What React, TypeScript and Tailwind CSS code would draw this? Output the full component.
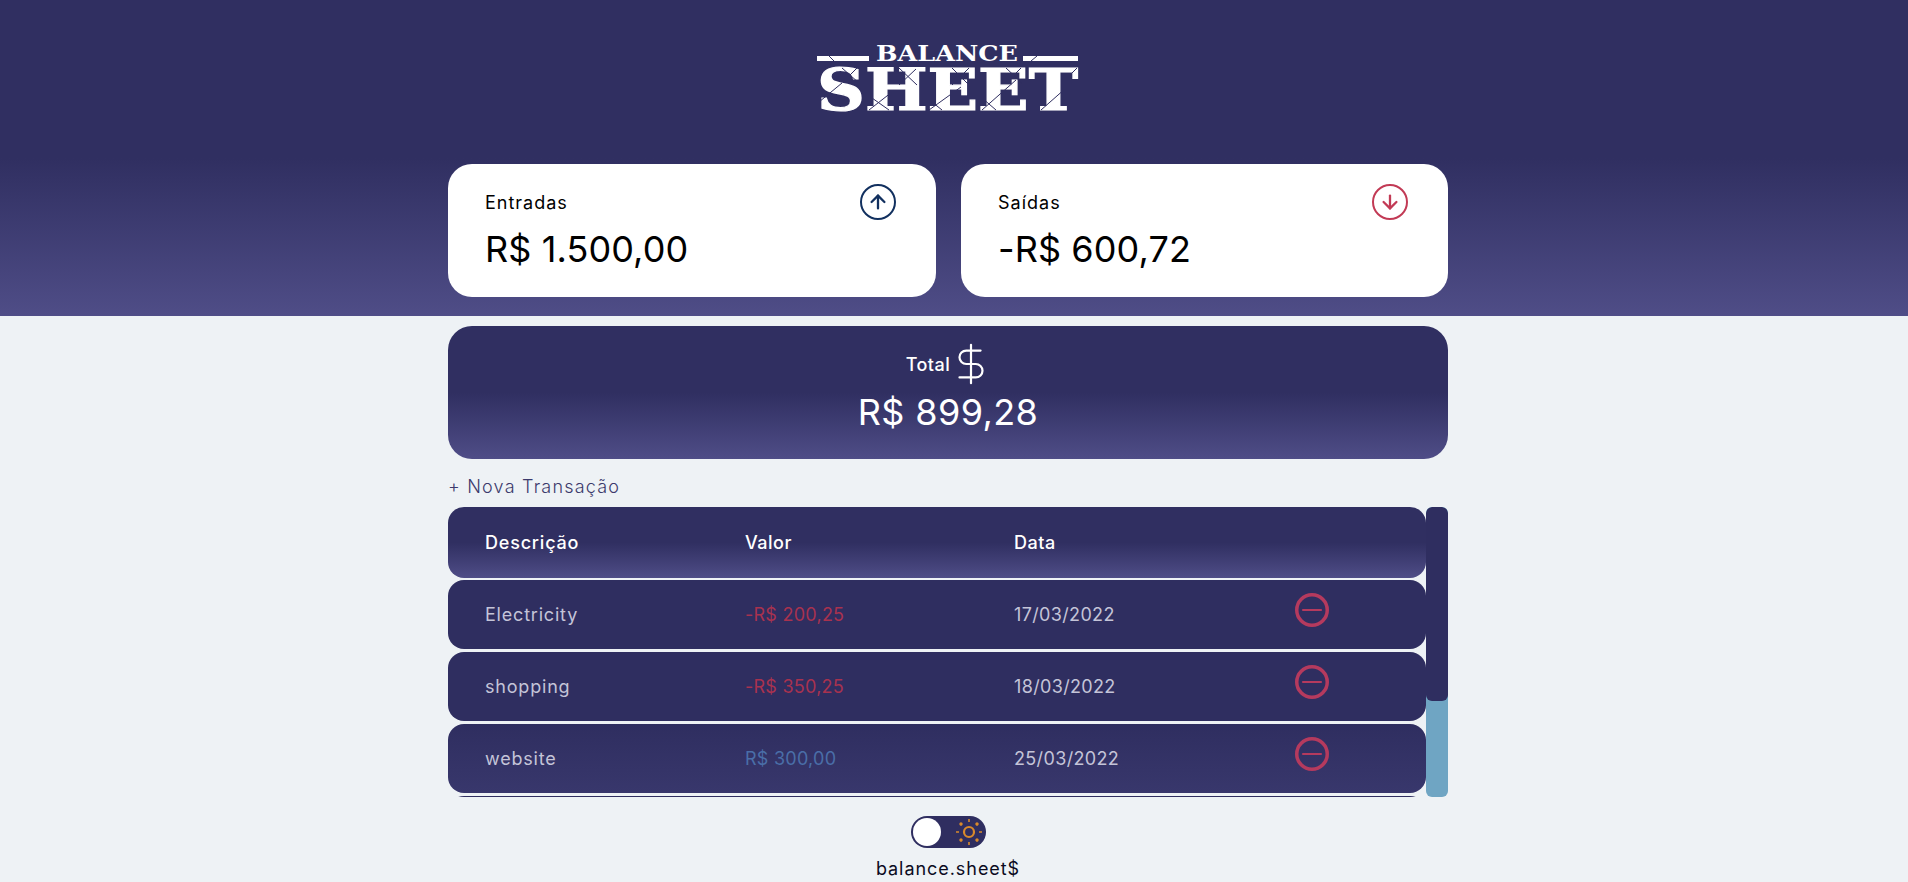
import { ArrowDown, ArrowUp, DollarSign } from "lucide-react";

const rows = [
  { name: "Electricity", value: "-R$ 200,25", date: "17/03/2022", out: true },
  { name: "shopping", value: "-R$ 350,25", date: "18/03/2022", out: true },
  { name: "website", value: "R$ 300,00", date: "25/03/2022", out: false },
];

// thin cuts across the wordmark, in logo coordinates
const cuts = [
  [12, 11, 17, 16],
  [214, 16, 220, 11],
  [25, 23, 42, 38],
  [40, 23, 30, 33],
  [2, 57, 25, 38],
  [52, 65, 75, 47],
  [55, 53, 72, 65],
  [82, 23, 100, 40],
  [99, 24, 82, 40],
  [135, 23, 152, 40],
  [152, 23, 135, 40],
  [110, 53, 125, 65],
  [112, 65, 144, 42],
  [165, 53, 179, 65],
  [165, 65, 199, 35],
  [189, 23, 205, 38],
  [204, 23, 195, 32],
  [260, 23, 250, 33],
  [224, 65, 249, 43],
];

function Logo() {
  return (
    <svg width="262" height="66" viewBox="0 0 262 66" className="block overflow-visible">
      <rect x="0" y="11" width="52" height="5" fill="#fff" />
      <rect x="206" y="11" width="55" height="5" fill="#fff" />
      <text
        x="59"
        y="16"
        textLength="142"
        lengthAdjust="spacingAndGlyphs"
        fontFamily="'DejaVu Serif', serif"
        fontWeight="700"
        fontSize="22"
        fill="#fff"
      >
        BALANCE
      </text>
      <text
        x="0"
        y="65"
        textLength="261"
        lengthAdjust="spacingAndGlyphs"
        fontFamily="'DejaVu Serif', serif"
        fontWeight="700"
        fontSize="58"
        fill="#fff"
        stroke="#fff"
        strokeWidth="1.2"
      >
        SHEET
      </text>
      {cuts.map(([x1, y1, x2, y2], i) => (
        <line key={i} x1={x1} y1={y1} x2={x2} y2={y2} stroke="#302f61" strokeWidth="1" />
      ))}
    </svg>
  );
}

function SummaryCard({
  label,
  value,
  color,
  up,
  className,
}: {
  label: string;
  value: string;
  color: string;
  up: boolean;
  className: string;
}) {
  const Arrow = up ? ArrowUp : ArrowDown;
  return (
    <div className={`relative h-[133px] rounded-[24px] bg-white pl-[37px] pt-[27px] text-black ${className}`}>
      <p className="text-[18px] leading-[24px] tracking-[1px]">{label}</p>
      <p className="mt-[12px] text-[36px] leading-[44px] tracking-[0.1px]">{value}</p>
      <span
        className="absolute right-[40px] top-[20px] flex h-[36px] w-[36px] items-center justify-center rounded-full border-[2.5px]"
        style={{ borderColor: color, color }}
      >
        <Arrow size={22} strokeWidth={2.5} />
      </span>
    </div>
  );
}

function MinusIcon() {
  return (
    <svg width="34" height="34" viewBox="0 0 34 34" fill="none" className="-mt-[9px] block">
      <circle cx="17" cy="17" r="15.25" stroke="#b53a5e" strokeWidth="3.5" />
      <path d="M8 17h18" stroke="#b53a5e" strokeWidth="2.2" strokeLinecap="round" />
    </svg>
  );
}

function SunIcon() {
  return (
    <svg width="28" height="28" viewBox="0 0 28 28" fill="none" stroke="#d98a2b" className="block">
      <circle cx="14" cy="14" r="5" strokeWidth="2.2" />
      <path d="M14 1v3M14 24v3M1 14h3M24 14h3" strokeWidth="1.6" />
      <path d="M6 6l.01.01M22 6l.01.01M6 22l.01.01M22 22l.01.01" strokeWidth="3.4" strokeLinecap="round" />
    </svg>
  );
}

export default function App() {
  return (
    <div className="h-[882px] overflow-hidden bg-[#eef2f5] font-['Inter',sans-serif] text-black">
      <header className="h-[316px] bg-linear-to-b from-[#302f61] from-50% to-[#4f4d87] pr-[12px] pt-[45px]">
        <div className="flex justify-center">
          <Logo />
        </div>
        <div className="mx-auto mt-[53px] flex w-[1000px] gap-[25px]">
          <SummaryCard label="Entradas" value="R$ 1.500,00" color="#12305f" up className="w-[488px]" />
          <SummaryCard label="Saídas" value="-R$ 600,72" color="#c23a55" up={false} className="w-[487px]" />
        </div>
      </header>

      <main className="mx-auto flex w-[1000px] -translate-x-[6px] flex-col pt-[10px]">
        <section className="flex h-[133px] flex-col items-center rounded-[24px] bg-linear-to-b from-[#302f61] from-50% to-[#4f4d87] pt-[18px] text-white">
          <div className="flex h-[39px] items-center">
            <span className="pt-[2px] text-[18px] font-medium tracking-[0.5px]">Total</span>
            <DollarSign size={46} strokeWidth={1.15} className="-my-[4px] ml-[-2px] mr-[-4px]" />
          </div>
          <p className="mt-[7px] text-[36px] leading-[44px] tracking-[0.4px]">R$ 899,28</p>
        </section>

        <button className="mt-[15px] self-start text-left text-[18px] font-light leading-[26px] tracking-[1.2px] text-[#3c3a6c]">
          + Nova Transação
        </button>

        <div className="mt-[7px] flex h-[290px]">
          <div className="flex h-full w-[978px] flex-col gap-[3px] overflow-hidden">
            <div className="-mb-px grid h-[71px] shrink-0 grid-cols-[260px_269px_1fr] items-center rounded-[16px] bg-linear-to-b from-[#302f61] from-50% to-[#4f4d87] pl-[37px] pr-[38px] text-[18px] font-medium leading-[26px] text-white">
              <span className="tracking-[0.8px]">Descrição</span>
              <span className="tracking-[0.5px]">Valor</span>
              <span className="tracking-[0.5px]">Data</span>
            </div>
            {rows.map((row, i) => (
              <div
                key={row.name}
                className={`grid h-[69px] shrink-0 grid-cols-[260px_269px_281px_34px] items-center rounded-[16px] pl-[37px] text-[18px] leading-[26px] text-[#c4c4d8] ${
                  i === 2 ? "bg-linear-to-b from-[#2f2e60] to-[#38376c]" : "bg-[#2f2e60]"
                }`}
              >
                <span className="tracking-[0.8px]">{row.name}</span>
                <span className={`tracking-[0.25px] ${row.out ? "text-[#a8324f]" : "text-[#4a6ea8]"}`}>{row.value}</span>
                <span className="tracking-[0.35px]">{row.date}</span>
                <MinusIcon />
              </div>
            ))}
            <div className="h-[69px] shrink-0 rounded-[16px] bg-[#2f2e60]" />
          </div>
          <div className="flex h-full w-[22px] flex-col overflow-hidden rounded-[6px] bg-[#6fa5c3]">
            <div className="h-[194px] rounded-[6px] bg-[#2f2e60]" />
          </div>
        </div>

        <div className="mt-[19px] flex justify-center">
          <div className="relative flex h-[32px] w-[75px] items-center rounded-full bg-[#2f2e60] pl-[2px]">
            <span className="h-[28px] w-[28px] rounded-full bg-white" />
            <span className="absolute right-[3px] top-[2px]">
              <SunIcon />
            </span>
          </div>
        </div>
        <p className="mt-[9px] text-center text-[18px] leading-[24px] tracking-[0.95px] text-[#0b0b1e]">balance.sheet$</p>
      </main>
    </div>
  );
}
